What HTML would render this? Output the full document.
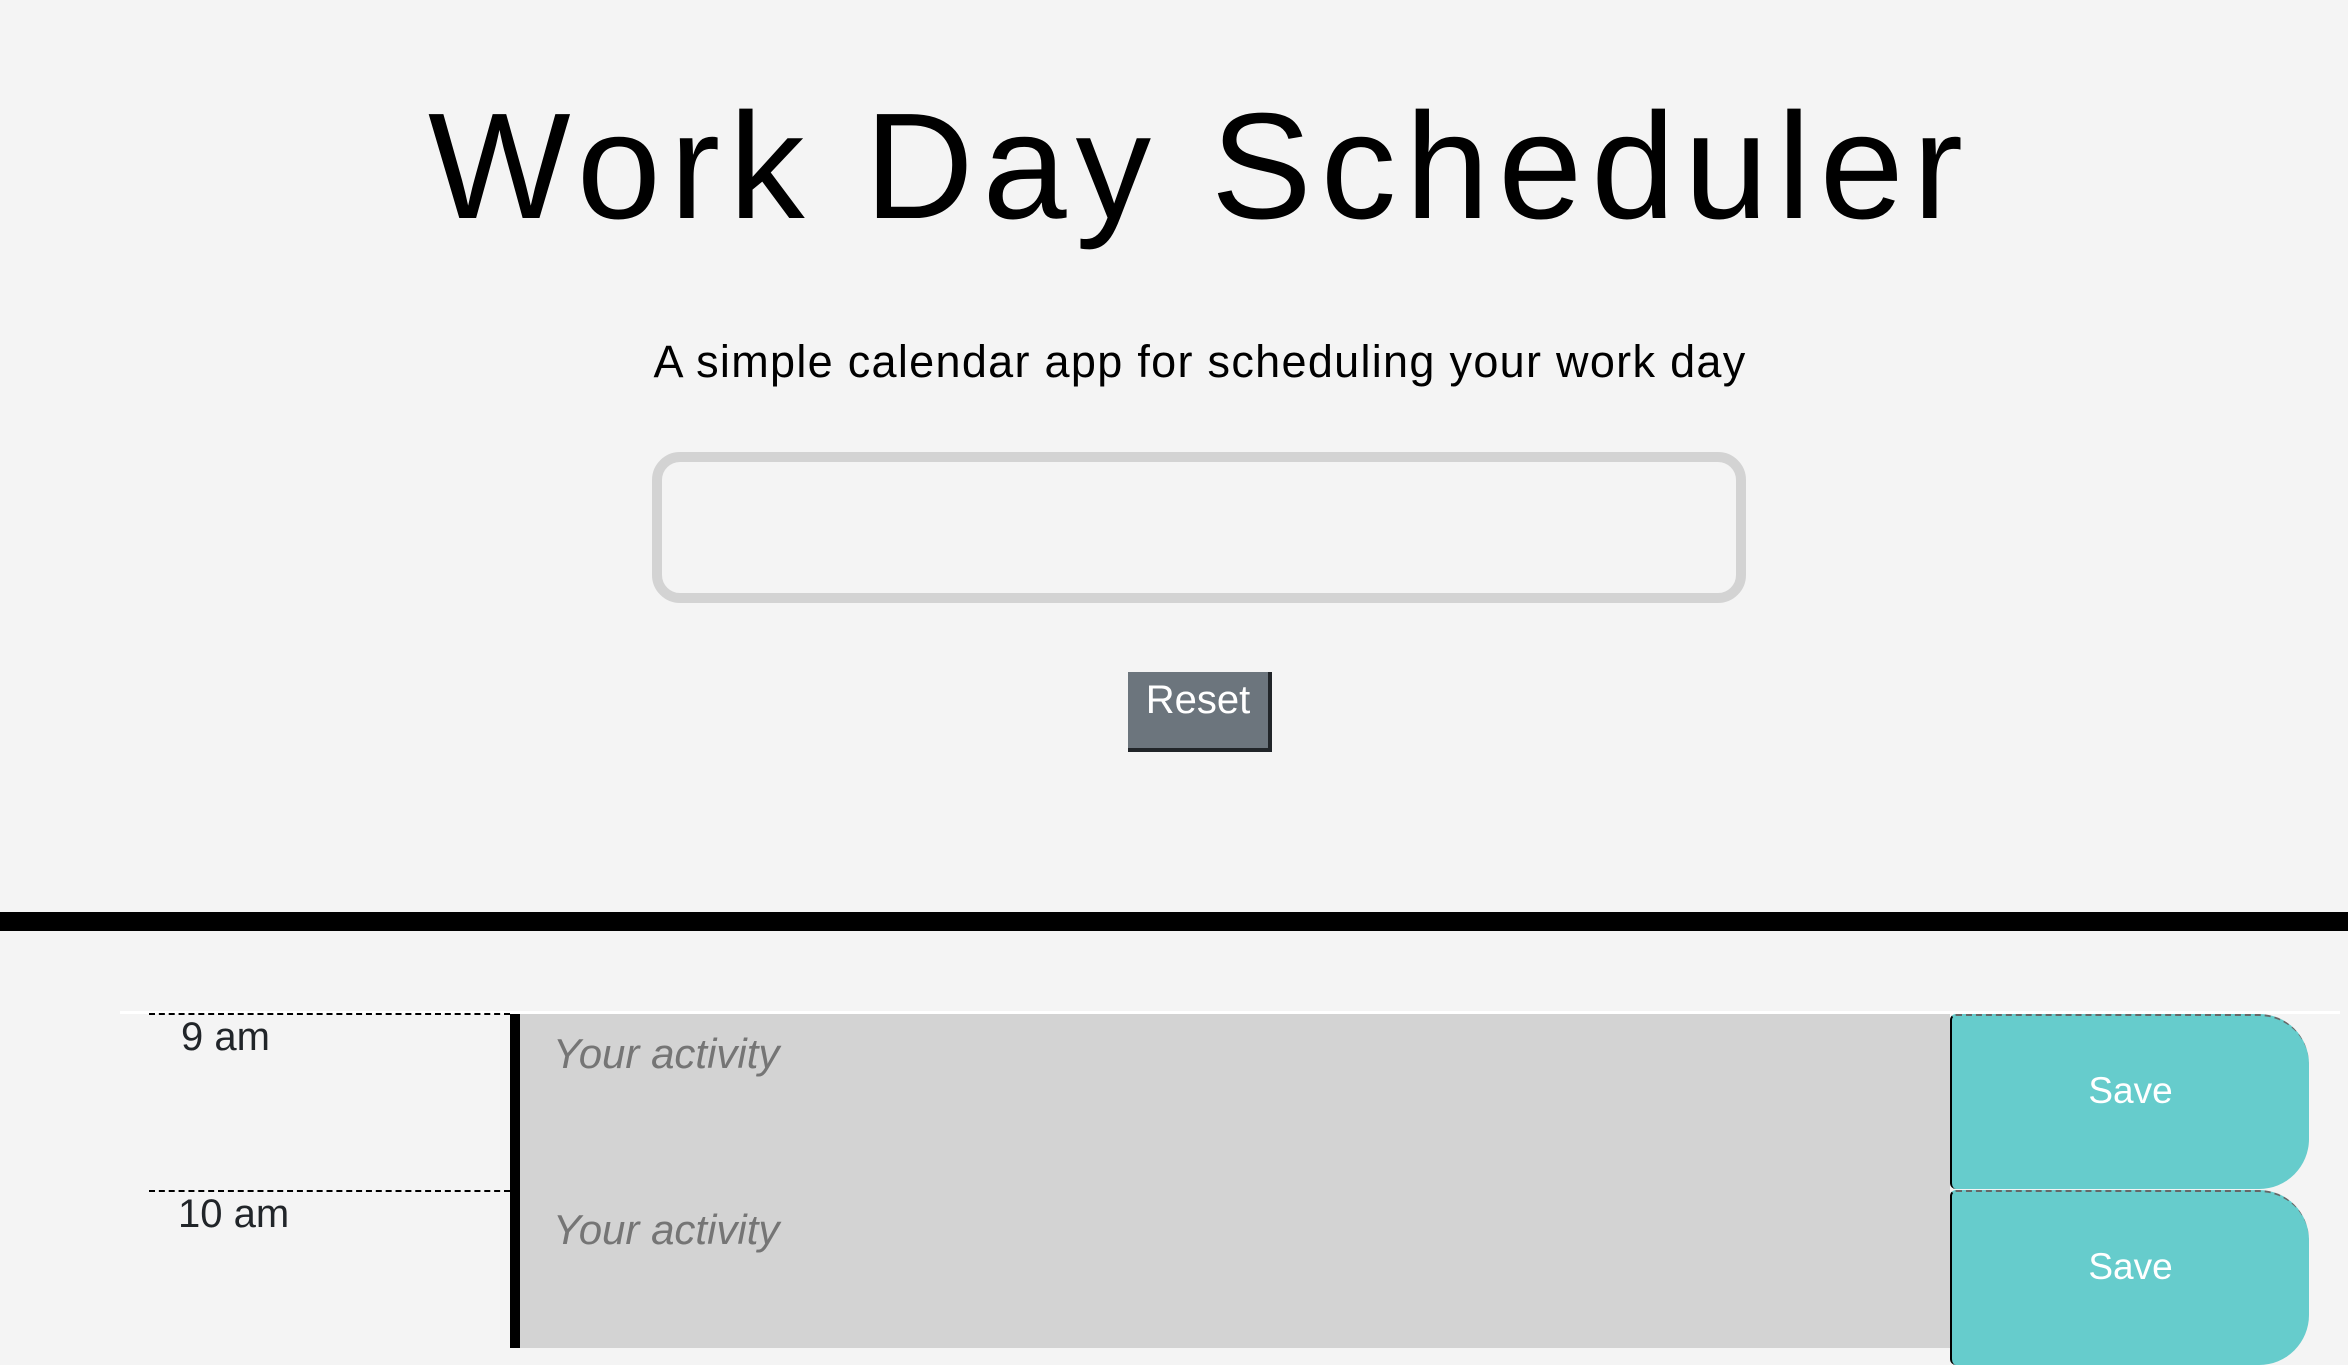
<!DOCTYPE html>
<html><head><style>
html,body{margin:0;padding:0;width:2348px;height:1348px;overflow:hidden;background:#f4f4f4;font-family:"Liberation Sans",sans-serif;}
.abs{position:absolute;}
h1{position:absolute;left:26px;width:2348px;margin:0;text-align:center;font-weight:normal;font-size:151px;line-height:151px;letter-spacing:9px;top:90px;color:#000;}
.sub{left:26px;width:2348px;text-align:center;top:334px;font-size:45px;line-height:56px;color:#000;letter-spacing:1.3px;}
.inp{left:652px;top:452px;width:1074px;height:131px;border:10px solid #d3d3d3;border-radius:28px;}
.reset{left:1128px;top:672px;width:140px;height:76px;background:#6c757d;border-right:4px solid #212529;border-bottom:4px solid #212529;color:#fff;font-size:40px;text-align:center;line-height:56px;box-sizing:content-box;}
.bar{left:0;top:912px;width:2348px;height:19px;background:#000;}
.topline{left:120px;top:1011px;width:2220px;height:3px;background:#fff;}
.dash{left:149px;width:361px;border-top:2px dashed #000;}
.vline{left:510px;top:1014px;width:10px;height:334px;background:#000;}
.ta{left:520px;top:1014px;width:1430px;height:334px;background:#d3d3d3;}
.hour{font-size:40px;color:#212529;}
.act{font-size:42px;font-style:italic;color:#757575;}
.save{left:1950px;width:359px;height:175px;background:#66cccc;border-left:2px solid #000;border-top:2px dashed #666;border-radius:6px 50px 50px 6px;box-sizing:border-box;color:#fff;font-size:37px;text-align:center;line-height:150px;}
</style></head><body>
<h1>Work Day Scheduler</h1>
<div class="abs sub">A simple calendar app for scheduling your work day</div>
<div class="abs inp"></div>
<div class="abs reset">Reset</div>
<div class="abs bar"></div>
<div class="abs topline"></div>
<div class="abs ta"></div>
<div class="abs vline"></div>
<div class="abs dash" style="top:1013px"></div>
<div class="abs dash" style="top:1190px"></div>
<div class="abs hour" style="left:181px;top:1015px">9 am</div>
<div class="abs hour" style="left:178px;top:1192px">10 am</div>
<div class="abs act" style="left:553px;top:1030px">Your activity</div>
<div class="abs act" style="left:553px;top:1206px">Your activity</div>
<div class="abs save" style="top:1014px">Save</div>
<div class="abs save" style="top:1190px">Save</div>
</body></html>
